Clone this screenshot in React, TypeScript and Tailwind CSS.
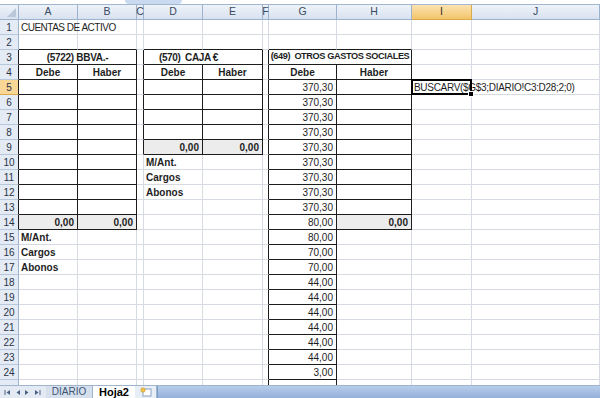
import type React from 'react'

// column widths: row number column, then A..J
const COLS = [19, 59, 59, 7, 59, 60, 6, 68, 75, 60, 128]
const LETTERS = ['', 'A', 'B', 'C', 'D', 'E', 'F', 'G', 'H', 'I', 'J']
const ROWS = Array.from({ length: 25 }, (_, i) => i + 1)

type Cell = {
  text: string
  align?: 'left' | 'center' | 'right'
  bold?: boolean
  grey?: boolean
  span?: number
  indent?: boolean
  cls?: string
}

const cells: Record<string, Cell> = {
  '1-1': { text: 'CUENTAS DE ACTIVO', cls: 'tracking-[-0.5px]' },
  '3-1': { text: '(5722) BBVA.-', bold: true, align: 'center', span: 2, cls: 'tracking-[-0.3px]' },
  '3-4': { text: '(570)  CAJA €', bold: true, span: 2, indent: true, cls: 'tracking-[-0.4px]' },
  '3-7': {
    text: '(649)  OTROS GASTOS SOCIALES',
    bold: true,
    align: 'center',
    span: 2,
    cls: 'text-[9.2px] tracking-[-0.4px]',
  },
  '4-1': { text: 'Debe', bold: true, align: 'center' },
  '4-2': { text: 'Haber', bold: true, align: 'center' },
  '4-4': { text: 'Debe', bold: true, align: 'center' },
  '4-5': { text: 'Haber', bold: true, align: 'center' },
  '4-7': { text: 'Debe', bold: true, align: 'center' },
  '4-8': { text: 'Haber', bold: true, align: 'center' },
  '14-1': { text: '0,00', bold: true, align: 'right', grey: true },
  '14-2': { text: '0,00', bold: true, align: 'right', grey: true },
  '9-4': { text: '0,00', bold: true, align: 'right', grey: true },
  '9-5': { text: '0,00', bold: true, align: 'right', grey: true },
  '14-8': { text: '0,00', bold: true, align: 'right', grey: true },
  '15-1': { text: 'M/Ant.', bold: true },
  '16-1': { text: 'Cargos', bold: true },
  '17-1': { text: 'Abonos', bold: true },
  '10-4': { text: 'M/Ant.', bold: true },
  '11-4': { text: 'Cargos', bold: true },
  '12-4': { text: 'Abonos', bold: true },
  '5-9': { text: 'BUSCARV($G$3;DIARIO!C3:D28;2;0)', cls: 'tracking-[-0.3px]' },
}

const gastos: Record<number, string> = {
  5: '370,30', 6: '370,30', 7: '370,30', 8: '370,30', 9: '370,30', 10: '370,30',
  11: '370,30', 12: '370,30', 13: '370,30', 14: '80,00', 15: '80,00', 16: '70,00',
  17: '70,00', 18: '44,00', 19: '44,00', 20: '44,00', 21: '44,00', 22: '44,00',
  23: '44,00', 24: '3,00',
}
Object.entries(gastos).forEach(([r, v]) => {
  cells[`${r}-7`] = { text: v, align: 'right' }
})

// cells inside the drawn tables
function boxed(r: number, c: number) {
  if ((c === 1 || c === 2) && r >= 3 && r <= 14) return true
  if ((c === 4 || c === 5) && r >= 3 && r <= 9) return true
  if ((c === 7 || c === 8) && r >= 3 && r <= 14) return true
  if (c === 7 && r >= 15 && r <= 26) return true
  return false
}

function Arrow({ dir, bar }: { dir: 'l' | 'r'; bar?: boolean }) {
  return (
    <svg width="7" height="7" viewBox="0 0 7 7" className="fill-[#4a6184]">
      {dir === 'l' ? (
        <>
          {bar && <rect x="0.5" y="1" width="1" height="5" />}
          <path d="M6 1 L2.5 3.5 L6 6 Z" />
        </>
      ) : (
        <>
          <path d="M1 1 L4.5 3.5 L1 6 Z" />
          {bar && <rect x="5.5" y="1" width="1" height="5" />}
        </>
      )}
    </svg>
  )
}

function SheetRow({ r }: { r: number }) {
  const out: React.ReactNode[] = []
  const rowSel = r === 5
  out.push(
    <div
      key="n"
      style={{ width: COLS[0] }}
      className={`h-full shrink-0 flex items-center justify-center border-b border-r text-[10px] text-[#2a3346] ${
        rowSel ? 'bg-[#f8d696] border-b-[#d9a94a]' : 'bg-[#e4ebf5] border-b-[#b8c8dc]'
      } ${boxed(r, 1) ? 'border-r-[#1c1c1c]' : 'border-r-[#9db3cd]'}`}
    >
      {r < 25 ? r : ''}
    </div>
  )
  let c = 1
  while (c < COLS.length) {
    const cell = cells[`${r}-${c}`]
    const span = cell?.span ?? 1
    let w = 0
    for (let k = c; k < c + span; k++) w += COLS[k]
    const last = c + span - 1
    const rightBlack = boxed(r, last) || boxed(r, last + 1)
    const bottomBlack = boxed(r, c) || boxed(r + 1, c)
    const align =
      cell?.align === 'right'
        ? 'justify-end pr-[3px]'
        : cell?.align === 'center'
          ? 'justify-center'
          : cell?.indent
            ? 'pl-[15px]'
            : 'pl-[2px]'
    out.push(
      <div
        key={c}
        style={{ width: w }}
        className={`relative h-full shrink-0 flex items-center whitespace-pre border-r border-b ${align} ${
          rightBlack ? 'border-r-[#1c1c1c]' : 'border-r-[#d5dae3]'
        } ${bottomBlack ? 'border-b-[#1c1c1c]' : 'border-b-[#d5dae3]'} ${cell?.grey ? 'bg-[#ececec]' : ''} ${
          cell?.bold ? 'font-bold' : ''
        } ${cell?.cls ?? ''}`}
      >
        {cell && <span className="relative z-10">{cell.text}</span>}
        {r === 5 && c === 9 && (
          <div className="absolute -left-[1px] -top-[1px] -right-[1px] -bottom-[1px] z-20 border-2 border-black">
            <div className="absolute -right-[4px] -bottom-[4px] w-[6px] h-[6px] bg-black border border-white" />
          </div>
        )}
      </div>
    )
    c += span
  }
  return <div className="flex h-[15px] shrink-0">{out}</div>
}

export default function App() {
  return (
    <div
      className="h-[398px] w-[600px] overflow-hidden bg-white flex flex-col text-[10px] text-[#1e1e1e]"
      style={{ fontFamily: '"Liberation Sans", Arial, sans-serif' }}
    >
      {/* formula bar edge */}
      <div className="h-[5px] shrink-0 flex border-b border-[#a3b6cf]">
        <div className="w-[125px]" />
        <div className="w-[57px] bg-[#c9daf0] rounded-b-sm" />
        <div className="flex-1" />
      </div>

      {/* column headers */}
      <div className="flex h-[15px] shrink-0">
        <div
          style={{ width: COLS[0] }}
          className="relative shrink-0 bg-linear-to-b from-[#eef3fa] to-[#d8e2ef] border-r border-b border-[#9db3cd]"
        >
          <div className="absolute right-[2px] bottom-[2px] w-0 h-0 border-l-[9px] border-l-transparent border-b-[9px] border-b-[#b9c7d9]" />
        </div>
        {LETTERS.slice(1).map((l, i) => {
          const sel = l === 'I'
          return (
            <div
              key={l}
              style={{ width: COLS[i + 1] }}
              className={`shrink-0 flex items-center justify-center border-r border-b text-[10.5px] ${
                sel
                  ? 'bg-linear-to-b from-[#fbe3b0] to-[#f3c467] border-[#d9a94a] text-[#2c2c2c]'
                  : 'bg-linear-to-b from-[#eef3fa] to-[#d8e2ef] border-[#9db3cd] text-[#3a4a63]'
              }`}
            >
              {l}
            </div>
          )
        })}
      </div>

      {/* grid */}
      <div className="flex-1 min-h-0 overflow-hidden flex flex-col">
        {ROWS.map((r) => (
          <SheetRow key={r} r={r} />
        ))}
      </div>

      {/* sheet tabs */}
      <div className="h-[13px] shrink-0 flex items-stretch bg-[#e3eaf4] border-t border-[#9fb4cf]">
        <div className="w-[46px] shrink-0 flex items-center gap-[3px] pl-[4px]">
          <Arrow dir="l" bar />
          <Arrow dir="l" />
          <Arrow dir="r" />
          <Arrow dir="r" bar />
        </div>
        <div className="w-[47px] shrink-0 flex items-center justify-center bg-[#d6e0ed] border-r border-[#9fb4cf] text-[#3e5474] text-[10px] leading-none">
          DIARIO
        </div>
        <div className="w-[42px] shrink-0 flex items-center justify-center bg-white font-bold text-[11px] leading-none text-black">
          Hoja2
        </div>
        <div className="w-[22px] shrink-0 flex items-center justify-center bg-[#e8eef6] border-r border-[#9fb4cf]">
          <svg width="12" height="10" viewBox="0 0 12 10">
            <rect x="3" y="2" width="8" height="7" fill="#fff" stroke="#8aa1c2" />
            <circle cx="3" cy="3" r="2.2" fill="#f2c24e" stroke="#c9962a" strokeWidth="0.6" />
          </svg>
        </div>
        <div className="flex-1 bg-linear-to-b from-[#b8cdea] to-[#93b0da] border-l border-[#7e9cc6]" />
      </div>
    </div>
  )
}
